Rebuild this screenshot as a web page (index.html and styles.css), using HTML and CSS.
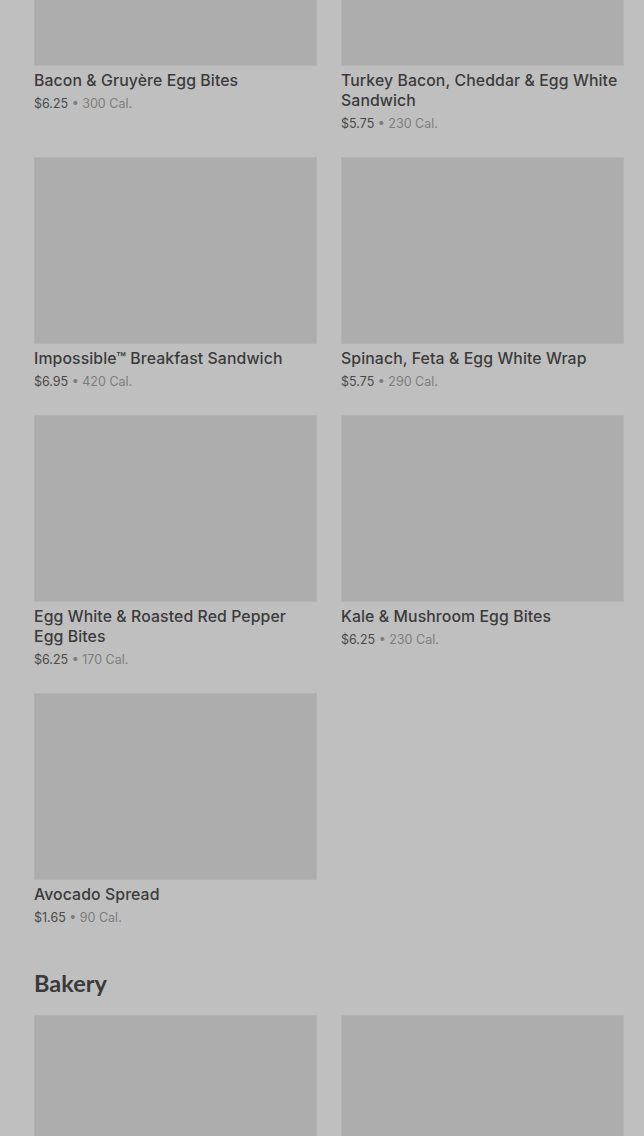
FILE: index.html
```html
<!DOCTYPE html>
<html lang="en">
<head>
    <meta charset="UTF-8">
    <meta name="viewport" content="width=device-width, initial-scale=1.0">
    <title>Menu</title>
    <link rel="stylesheet" href="styles.css">
</head>
<body>
    <div class="menu">
        <!-- Breakfast (scrolled part) -->
        <section class="category">
            <div class="grid">
                <div class="item">
                    <div class="thumb"></div>
                    <div class="name">Bacon &amp; Gruyère Egg Bites</div>
                    <div class="meta"><span class="price">$6.25</span> <span class="cal">• 300 Cal.</span></div>
                </div>
                <div class="item">
                    <div class="thumb"></div>
                    <div class="name">Turkey Bacon, Cheddar &amp; Egg White Sandwich</div>
                    <div class="meta"><span class="price">$5.75</span> <span class="cal">• 230 Cal.</span></div>
                </div>
                <div class="item">
                    <div class="thumb"></div>
                    <div class="name">Impossible™ Breakfast Sandwich</div>
                    <div class="meta"><span class="price">$6.95</span> <span class="cal">• 420 Cal.</span></div>
                </div>
                <div class="item">
                    <div class="thumb"></div>
                    <div class="name">Spinach, Feta &amp; Egg White Wrap</div>
                    <div class="meta"><span class="price">$5.75</span> <span class="cal">• 290 Cal.</span></div>
                </div>
                <div class="item">
                    <div class="thumb"></div>
                    <div class="name">Egg White &amp; Roasted Red Pepper Egg Bites</div>
                    <div class="meta"><span class="price">$6.25</span> <span class="cal">• 170 Cal.</span></div>
                </div>
                <div class="item">
                    <div class="thumb"></div>
                    <div class="name">Kale &amp; Mushroom Egg Bites</div>
                    <div class="meta"><span class="price">$6.25</span> <span class="cal">• 230 Cal.</span></div>
                </div>
                <div class="item">
                    <div class="thumb"></div>
                    <div class="name">Avocado Spread</div>
                    <div class="meta"><span class="price">$1.65</span> <span class="cal">• 90 Cal.</span></div>
                </div>
            </div>
        </section>

        <!-- Bakery -->
        <section class="category">
            <h2>Bakery</h2>
            <div class="grid">
                <div class="item">
                    <div class="thumb"></div>
                </div>
                <div class="item">
                    <div class="thumb"></div>
                </div>
            </div>
        </section>
    </div>
</body>
</html>
```

FILE: styles.css
```css
/* Halaman menu (di bawah overlay abu-abu) */
body {
    margin: 0;
    padding: 0;
    background: #bfbfbf;
    font-family: 'Inter', 'Roboto', sans-serif;
    color: #3b3b3b;
    overflow: hidden;
}
.menu {
    margin-top: -121px;
    padding: 0 20px 0 34px;
}
.grid {
    display: grid;
    grid-template-columns: 283px 283px;
    column-gap: 24px;
    row-gap: 23px;
}
.thumb {
    height: 187px;
    background: #adadad;
    box-shadow: inset 0 0 0 1px rgba(255, 255, 255, 0.07);
}
.name {
    margin-top: 5px;
    font-size: 15.8px;
    line-height: 20px;
    font-weight: 500;
    letter-spacing: 0.1px;
    color: #3b3b3b;
}
.meta {
    margin-top: 3px;
    font-size: 12.5px;
    line-height: 20px;
}
.price {
    color: #4a4a4a;
}
.cal {
    color: #7d7d7d;
}
.category h2 {
    margin: 40px 0 17px;
    font-family: 'Lato', sans-serif;
    font-size: 23.5px;
    line-height: 30px;
    font-weight: 700;
    color: #3a3a3a;
}
```
